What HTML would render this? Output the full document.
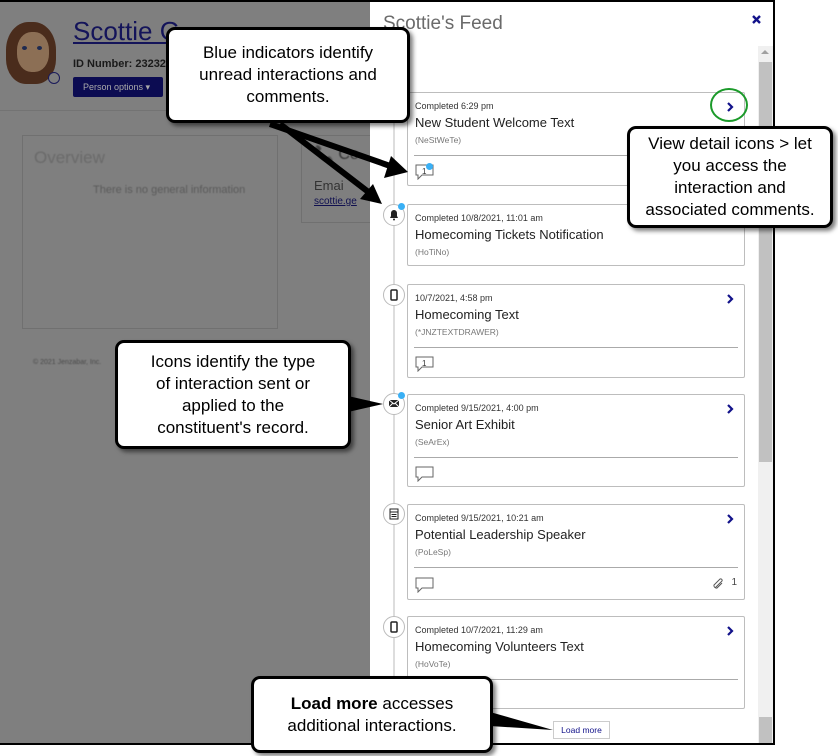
<!DOCTYPE html>
<html><head><meta charset="utf-8"><style>
*{margin:0;padding:0;box-sizing:border-box}
body{width:838px;height:756px;background:#fff;position:relative;overflow:hidden;font-family:"Liberation Sans",Arial,sans-serif}
.a{position:absolute}
.frame{left:0;top:0;width:775px;height:745px;border:2px solid #000;border-left:none;background:#7f7f7f;overflow:hidden}
.panel{left:370px;top:0;width:404px;height:745px;background:#fff}
.card{position:absolute;left:407px;width:338px;border:1px solid #bdbdbd;border-radius:2px;background:#fff}
.card .d{position:absolute;left:7px;top:8px;font-size:9px;color:#333}
.card .t{position:absolute;left:7px;top:22px;font-size:13px;color:#222}
.card .c{position:absolute;left:7px;top:42px;font-size:8.5px;color:#777}
.card .hr{position:absolute;left:6px;right:6px;top:62px;border-top:1px solid #aaa}
.card .ch{position:absolute;right:10px;top:9px;width:8px;height:10px}
.bub{position:absolute;left:7px;width:19px;height:16px}
.ic{position:absolute;left:383px;width:22px;height:22px;border:1px solid #bbb;border-radius:50%;background:#fff}
.dot{position:absolute;width:7px;height:7px;border-radius:50%;background:#3ab0f5}
.call{position:absolute;background:#fff;border:3px solid #000;border-radius:9px;box-shadow:3px 3px 4px rgba(0,0,0,.5);font-size:17px;line-height:22px;text-align:center;color:#000;display:flex;align-items:center;justify-content:center}
.bl{filter:blur(0.6px)}
</style></head><body>
<div class="a frame">
 <div class="a" style="left:6px;top:20px;width:50px;height:62px;border-radius:45% 45% 40% 40%;background:#4a2c1c"></div>
 <div class="a" style="left:17px;top:30px;width:32px;height:40px;border-radius:45%;background:#8c6f55"></div>
 <div class="a" style="left:22px;top:44px;width:5px;height:4px;border-radius:50%;background:#1e2a50"></div>
 <div class="a" style="left:37px;top:44px;width:5px;height:4px;border-radius:50%;background:#1e2a50"></div>
 <div class="a" style="left:48px;top:70px;width:12px;height:12px;border-radius:50%;border:1.5px solid #1a1a5a;background:#7f7f7f"></div>
 <div class="a" style="left:73px;top:14px;font-size:26px;color:#14145a;text-decoration:underline">Scottie G</div>
 <div class="a" style="left:73px;top:56px;font-size:11px;font-weight:bold;color:#1a1a1a">ID Number: 232324</div>
 <div class="a" style="left:73px;top:75px;width:90px;height:20px;background:#0c0c52;border-radius:2px;color:#aaa;font-size:9px;line-height:20px;padding-left:10px">Person options ▾</div>
 <div class="a" style="left:0;top:108px;width:370px;border-top:1px solid #737373"></div>
 <div class="a" style="left:22px;top:133px;width:256px;height:194px;border:1px solid #707070"></div>
 <div class="a bl" style="left:34px;top:146px;font-size:17px;color:#6a6a6a">Overview</div>
 <div class="a bl" style="left:93px;top:182px;font-size:11px;color:#5a5a5a">There is no general information</div>
 <div class="a" style="left:301px;top:133px;width:80px;height:88px;border:1px solid #707070"></div>
 <div class="a bl" style="left:314px;top:142px;font-size:16px;color:#333">📞 Co</div>
 <div class="a" style="left:314px;top:176px;font-size:13px;color:#333">Emai</div>
 <div class="a" style="left:314px;top:194px;font-size:10px;color:#101050;text-decoration:underline">scottie.ge</div>
 <div class="a bl" style="left:33px;top:357px;font-size:7px;color:#4a4a4a">© 2021 Jenzabar, Inc.</div>

 <div class="a panel">
  <div class="a" style="left:13px;top:11px;font-size:19px;color:#6a6a6a">Scottie's Feed</div>
  <svg class="a" style="left:382px;top:13px" width="9" height="9" viewBox="0 0 9 9"><path d="M1 1L8 8M8 1L1 8" stroke="#12128a" stroke-width="2.4"/></svg>
  <div class="a" style="left:388px;top:44px;width:15px;height:701px;background:#f0f0f0"></div>
  <div class="a" style="left:389px;top:60px;width:13px;height:400px;background:#c1c1c1"></div>
  <div class="a" style="left:389px;top:715px;width:13px;height:30px;background:#c1c1c1"></div>
  <div class="a" style="left:391px;top:48px;width:0;height:0;border-left:4px solid transparent;border-right:4px solid transparent;border-bottom:4px solid #a0a0a0"></div>
  <div class="a" style="left:23px;top:60px;width:2px;height:685px;background:#ddd"></div>
 </div>
</div>

<div class="card" style="top:92px;height:94px"><div class="d">Completed 6:29 pm</div><div class="t">New Student Welcome Text</div><div class="c">(NeStWeTe)</div><div class="hr"></div><svg class="ch" viewBox="0 0 8 10"><path d="M2 1L6 5L2 9" stroke="#12128a" stroke-width="2.2" fill="none"/></svg>
<svg class="bub" style="top:71px" viewBox="0 0 19 16"><path d="M1 1H18V11H7L3 15V11H1Z" fill="none" stroke="#666"/><text x="7" y="10" font-size="8" fill="#333" font-family="Liberation Sans">1</text></svg><div class="dot" style="left:18px;top:70px"></div></div>

<div class="card" style="top:204px;height:62px"><div class="d">Completed 10/8/2021, 11:01 am</div><div class="t">Homecoming Tickets Notification</div><div class="c">(HoTiNo)</div></div>

<div class="card" style="top:284px;height:94px"><div class="d">10/7/2021, 4:58 pm</div><div class="t">Homecoming Text</div><div class="c">(*JNZTEXTDRAWER)</div><div class="hr"></div><svg class="ch" viewBox="0 0 8 10"><path d="M2 1L6 5L2 9" stroke="#12128a" stroke-width="2.2" fill="none"/></svg>
<svg class="bub" style="top:71px" viewBox="0 0 19 16"><path d="M1 1H18V11H7L3 15V11H1Z" fill="none" stroke="#666"/><text x="7" y="10" font-size="8" fill="#333" font-family="Liberation Sans">1</text></svg></div>

<div class="card" style="top:394px;height:93px"><div class="d">Completed 9/15/2021, 4:00 pm</div><div class="t">Senior Art Exhibit</div><div class="c">(SeArEx)</div><div class="hr"></div><svg class="ch" viewBox="0 0 8 10"><path d="M2 1L6 5L2 9" stroke="#12128a" stroke-width="2.2" fill="none"/></svg>
<svg class="bub" style="top:71px" viewBox="0 0 19 16"><path d="M1 1H18V11H7L3 15V11H1Z" fill="none" stroke="#666"/></svg></div>

<div class="card" style="top:504px;height:96px"><div class="d">Completed 9/15/2021, 10:21 am</div><div class="t">Potential Leadership Speaker</div><div class="c">(PoLeSp)</div><div class="hr"></div><svg class="ch" viewBox="0 0 8 10"><path d="M2 1L6 5L2 9" stroke="#12128a" stroke-width="2.2" fill="none"/></svg>
<svg class="bub" style="top:72px" viewBox="0 0 19 16"><path d="M1 1H18V11H7L3 15V11H1Z" fill="none" stroke="#666"/></svg>
<svg class="a" style="right:20px;top:73px" width="12" height="12" viewBox="0 0 12 12"><path d="M3 10L10 3A1.5 1.5 0 0 0 8 1L2 7A2.5 2.5 0 0 0 5 10L10 5" stroke="#555" fill="none"/></svg>
<div class="a" style="right:7px;top:72px;font-size:10px;color:#444">1</div></div>

<div class="card" style="top:616px;height:93px"><div class="d">Completed 10/7/2021, 11:29 am</div><div class="t">Homecoming Volunteers Text</div><div class="c">(HoVoTe)</div><div class="hr"></div><svg class="ch" viewBox="0 0 8 10"><path d="M2 1L6 5L2 9" stroke="#12128a" stroke-width="2.2" fill="none"/></svg></div>

<div class="ic" style="top:204px"><svg width="20" height="20" viewBox="0 0 20 20"><path d="M6 13H14L13 11V8A3 3 0 0 0 7 8V11Z" fill="#222"/><circle cx="10" cy="14.5" r="1" fill="#222"/></svg></div><div class="dot" style="left:398px;top:203px"></div>
<div class="ic" style="top:284px"><svg width="20" height="20" viewBox="0 0 20 20"><rect x="7" y="5" width="6" height="10" rx="1" fill="none" stroke="#222" stroke-width="1.5"/></svg></div>
<div class="ic" style="top:393px"><svg width="20" height="20" viewBox="0 0 20 20"><rect x="5" y="6" width="10" height="7" fill="#222"/><path d="M5 6L10 10L15 6M5 13L9 9M15 13L11 9" stroke="#fff" fill="none"/></svg></div><div class="dot" style="left:398px;top:392px"></div>
<div class="ic" style="top:503px"><svg width="20" height="20" viewBox="0 0 20 20"><rect x="6" y="5" width="8" height="10" fill="none" stroke="#222"/><path d="M6 8H14M7.5 10.5H12.5M7.5 12.5H12.5" stroke="#222"/></svg></div>
<div class="ic" style="top:616px"><svg width="20" height="20" viewBox="0 0 20 20"><rect x="7" y="5" width="6" height="10" rx="1" fill="none" stroke="#222" stroke-width="1.5"/></svg></div>

<div class="a" style="left:553px;top:721px;width:57px;height:18px;border:1px solid #ccc;background:#fff;font-size:8.5px;color:#12128a;text-align:center;line-height:16px">Load more</div>

<div class="a" style="left:710px;top:88px;width:38px;height:34px;border:2px solid #1b9a2a;border-radius:50%"></div>

<svg class="a" style="left:0;top:0" width="838" height="756">
 <path d="M270 124L396 168" stroke="#000" stroke-width="6"/><path d="M408 172L384 178L391 156Z" fill="#000"/>
 <path d="M280 124L371 194" stroke="#000" stroke-width="6"/><path d="M382 204L360 199L373 184Z" fill="#000"/>
 <path d="M348 396L383 404L348 412Z" fill="#000"/>
 <path d="M490 712L553 730L490 726Z" fill="#000"/>
</svg>

<div class="call" style="left:166px;top:27px;width:244px;height:96px">Blue indicators identify<br>unread interactions and<br>comments.</div>
<div class="call" style="left:627px;top:126px;width:206px;height:102px">View detail icons &gt; let<br>you access the<br>interaction and<br>associated comments.</div>
<div class="call" style="left:115px;top:340px;width:236px;height:109px">Icons identify the type<br>of interaction sent or<br>applied to the<br>constituent's record.</div>
<div class="call" style="left:251px;top:676px;width:242px;height:77px"><span><b>Load more</b> accesses<br>additional interactions.</span></div>
</body></html>
